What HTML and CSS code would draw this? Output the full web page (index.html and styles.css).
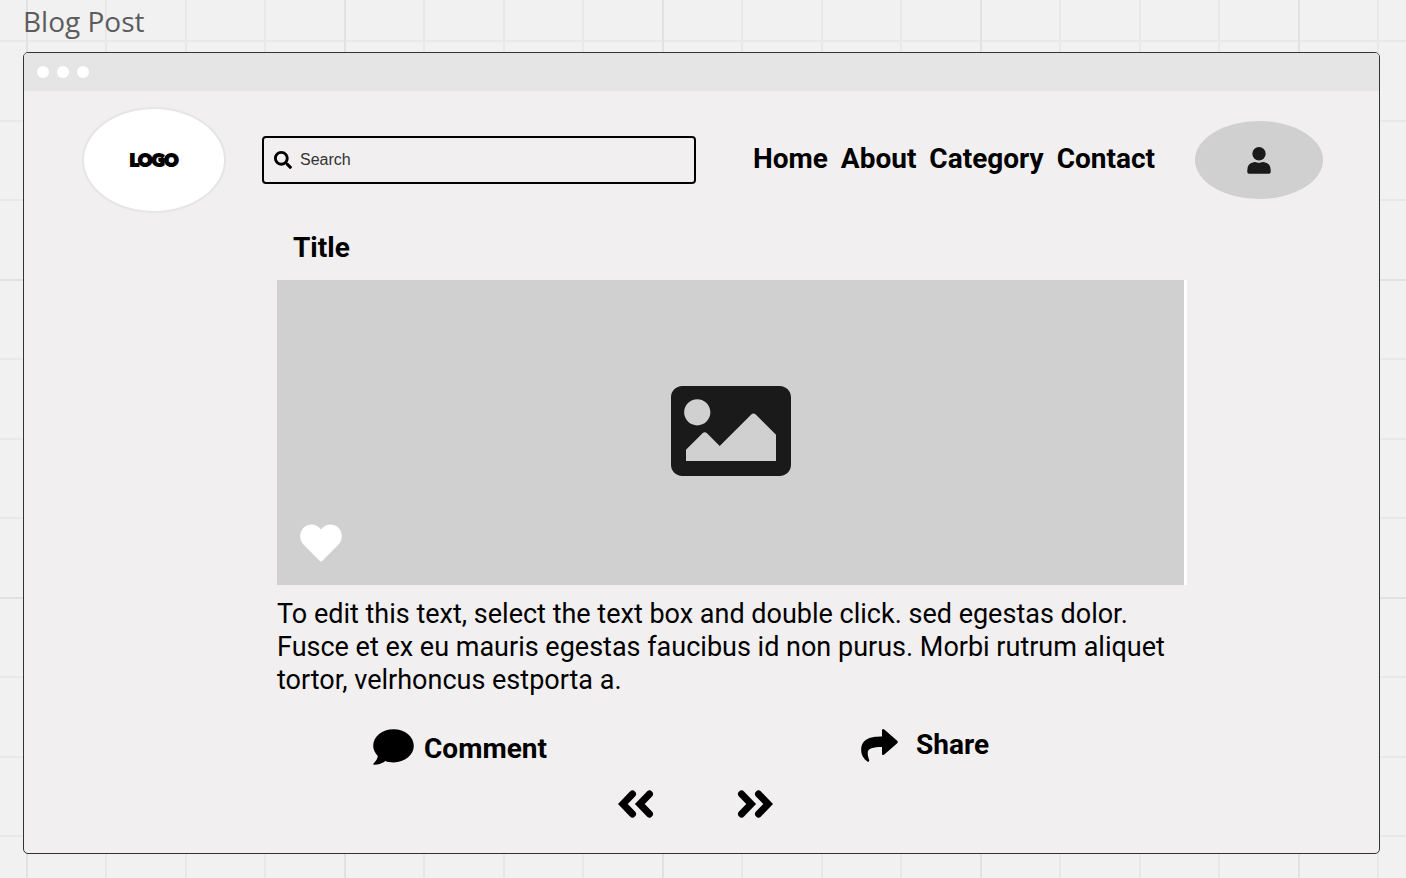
FILE: index.html
```html
<!DOCTYPE html>
<html lang="en">
<head>
<meta charset="utf-8">
<title>Blog Post</title>
<link rel="stylesheet" href="styles.css">
</head>
<body class="board">
<h1 class="frame-name">Blog Post</h1>
<div class="window">
  <div class="titlebar"><span class="dot"></span><span class="dot"></span><span class="dot"></span></div>
  <header class="header">
    <a class="logo" href="#">LOGO</a>
    <form class="search">
      <svg class="search-icon" viewBox="0 0 512 512" aria-hidden="true"><path d="M505 442.7L405.3 343c-4.5-4.5-10.6-7-17-7H372c27.6-35.3 44-79.7 44-128C416 93.1 322.9 0 208 0S0 93.1 0 208s93.1 208 208 208c48.3 0 92.7-16.4 128-44v16.3c0 6.4 2.5 12.5 7 17l99.7 99.7c9.4 9.4 24.6 9.4 33.9 0l28.3-28.3c9.4-9.4 9.4-24.6.1-34zM208 336c-70.7 0-128-57.2-128-128 0-70.7 57.2-128 128-128 70.7 0 128 57.2 128 128 0 70.7-57.2 128-128 128z"/></svg>
      <input class="search-input" type="search" placeholder="Search" aria-label="Search">
    </form>
    <nav class="nav">
      <a href="#">Home</a>
      <a href="#">About</a>
      <a href="#">Category</a>
      <a href="#">Contact</a>
    </nav>
    <button class="avatar" type="button" aria-label="Account">
      <svg class="user-icon" viewBox="0 0 24 27" aria-hidden="true"><circle cx="12" cy="6.8" r="6.7"/><path d="M6.5 15.2Q9 14.8 10 15.5Q12 16.2 14 15.5Q15 14.8 17.500 15.2Q23.700 16.500 23.700 23V25Q23.700 26.700 22 26.700H2Q.3 26.700 .3 25V23Q.3 16.500 6.500 15.200Z"/></svg>
    </button>
  </header>
  <main class="post">
    <h2 class="title">Title</h2>
    <div class="cover">
      <svg class="image-icon" viewBox="0 64 512 384" aria-hidden="true"><path d="M464 448H48c-26.510 0-48-21.490-48-48V112c0-26.510 21.490-48 48-48h416c26.510 0 48 21.490 48 48v288c0 26.510-21.490 48-48 48zM112 120c-30.928 0-56 25.072-56 56s25.072 56 56 56 56-25.072 56-56-25.072-56-56-56zM64 384h384V272l-87.515-87.515c-4.686-4.686-12.284-4.686-16.971 0L208 320l-55.515-55.515c-4.686-4.686-12.284-4.686-16.971 0L64 336v48z"/></svg>
      <button class="like" type="button" aria-label="Like">
        <svg class="heart-icon" viewBox="0 0 42 38" aria-hidden="true"><path d="M21 5.500C17 0 10 -1 5 2.500C-1 7-1 15 3 20L19.600 36.800Q21 38 22.400 36.800L39 20C43 15 43 7 37 2.500C32-1 25 0 21 5.500Z"/></svg>
      </button>
    </div>
    <p class="text">To edit this text, select the text box and double click. sed egestas dolor. Fusce et ex eu mauris egestas faucibus id non purus. Morbi rutrum aliquet tortor, velrhoncus estporta a.</p>
    <div class="actions">
      <button class="action comment" type="button">
        <svg class="comment-icon" viewBox="0 0 41 36" aria-hidden="true"><path d="M20.500 .2C31.800 .2 40.800 7.500 40.800 16.800S31.800 33.400 20.500 33.400C17.500 33.400 14.800 33 12.300 32C9.500 34.200 5.500 35.900 .8 35.700Q0 35.500 .5 34.600Q4.500 30.500 4.800 27C1.800 24 .2 20.500 .2 16.800C.2 7.500 9.200 .2 20.500 .2Z"/></svg>
        Comment
      </button>
      <button class="action share" type="button">
        <svg class="share-icon" viewBox="0 0 37 33" aria-hidden="true"><path d="M21 1.800Q21-.8 23.300 .6L36.200 11.800Q37.300 13 36.200 14.200L23.300 25.500Q21 27 21 24.400V18C12 18 6.500 19.500 6.700 24C6.800 27 7.500 29 8.200 31Q8.400 33.300 6.300 32.500C2.500 29.500 .2 26 .2 21C.2 10 9 7.500 21 7.500Z"/></svg>
        Share
      </button>
    </div>
  </main>
  <nav class="pager" aria-label="Posts">
    <a href="#" aria-label="Previous"><svg class="angle-icon" viewBox="0 0 36 28" aria-hidden="true"><path d="M14.500 4L4.800 14L14.500 24M31.500 4L21.800 14L31.500 24"/></svg></a>
    <a href="#" aria-label="Next"><svg class="angle-icon" viewBox="0 0 36 28" aria-hidden="true"><path d="M4.500 4L14.200 14L4.500 24M21.500 4L31.200 14L21.500 24"/></svg></a>
  </nav>
</div>
</body>
</html>
```
FILE: styles.css
```css
* { box-sizing: border-box; }

.board {
  margin: 0;
  min-height: 100vh;
  padding: 0 26px 24px 23px;
  display: flex;
  flex-direction: column;
  font-family: Roboto, sans-serif;
  color: #000;
  background-color: #f1f1f1;
  background-image:
    linear-gradient(90deg, #e1e1e1 2px, transparent 2px),
    linear-gradient(#e1e1e1 2px, transparent 2px),
    linear-gradient(90deg, transparent 79px, #e8e8e8 79px 81px, transparent 81px 159px, #e8e8e8 159px 161px, transparent 161px 238px, #e8e8e8 238px 240px, transparent 240px),
    linear-gradient(transparent 79px, #e8e8e8 79px 81px, transparent 81px 159px, #e8e8e8 159px 161px, transparent 161px 238px, #e8e8e8 238px 240px, transparent 240px);
  background-size: 318px 318px;
  background-position: 26px 279px;
}

.frame-name {
  margin: 0;
  height: 52px;
  font: 400 28px/42px "Open Sans", sans-serif;
  color: #5c5c5c;
}

.window {
  flex: 1;
  border: 1px solid #333;
  border-radius: 5px;
  background: #f1eff0;
  overflow: hidden;
}

.titlebar {
  height: 38px;
  padding: 0 13px;
  display: flex;
  align-items: center;
  gap: 8px;
  background: #e5e5e5;
}

.dot {
  width: 12px;
  height: 12px;
  border-radius: 50%;
  background: #fff;
}

.header {
  display: flex;
  align-items: center;
  padding: 16px 56px 0 58px;
}

.logo {
  flex: none;
  width: 144px;
  height: 106px;
  display: flex;
  align-items: center;
  justify-content: center;
  border: 2px solid #e5e5e5;
  border-radius: 50%;
  background: #fff;
  color: #000;
  font: 900 17px/20px Lato, sans-serif;
  -webkit-text-stroke: 2px #000;
  text-decoration: none;
}

.search {
  flex: 1;
  height: 48px;
  margin: 0 57px 0 36px;
  padding: 0 10px;
  display: flex;
  align-items: center;
  gap: 8px;
  border: 2px solid #000;
  border-radius: 4px;
}

.search-icon {
  flex: none;
  width: 18px;
  height: 18px;
}

.search-input {
  flex: 1;
  min-width: 0;
  padding: 0;
  border: 0;
  outline: 0;
  background: none;
  font: 16px/20px "Liberation Sans", sans-serif;
}

.search-input::placeholder { color: #333; }

.nav {
  display: flex;
  gap: 13px;
  padding-bottom: 2px;
  font-size: 28px;
  font-weight: 700;
  line-height: 32px;
}

.nav a {
  color: inherit;
  text-decoration: none;
}

.avatar {
  flex: none;
  width: 128px;
  height: 78px;
  margin-left: 40px;
  padding: 0;
  display: grid;
  place-items: center;
  border: 0;
  border-radius: 50%;
  background: #d0d0d0;
}

.user-icon {
  width: 24px;
  height: 27px;
  fill: #1a1a1a;
}

.post { margin: 0 192px 0 253px; }

.title {
  margin: 0;
  padding: 19px 16px 16px;
  font-size: 28px;
  line-height: 32px;
}

.cover {
  position: relative;
  height: 305px;
  display: grid;
  place-items: center;
  padding-bottom: 3px;
  border-right: 3px solid #fff;
  background: #d0d0d0;
}

.image-icon {
  width: 120px;
  height: 90px;
  fill: #1a1a1a;
}

.like {
  position: absolute;
  left: 23px;
  bottom: 23px;
  padding: 0;
  border: 0;
  background: none;
}

.heart-icon {
  display: block;
  width: 42px;
  height: 38px;
  fill: #fff;
}

.text {
  margin: 0;
  padding-top: 13px;
  font-size: 27px;
  line-height: 33px;
}

.actions {
  display: grid;
  grid-template-columns: 488px 1fr;
  align-items: start;
  padding: 32px 0 0 96px;
}

.action {
  justify-self: start;
  display: flex;
  padding: 0;
  border: 0;
  background: none;
  color: inherit;
  font: 700 28px/32px Roboto, sans-serif;
}

.comment {
  align-items: flex-end;
  gap: 10px;
}

.share {
  align-items: flex-start;
  gap: 18px;
}

.comment-icon {
  width: 41px;
  height: 36px;
}

.share-icon {
  width: 37px;
  height: 33px;
}

.pager {
  display: flex;
  justify-content: center;
  gap: 83px;
  padding: 25px 13px 0 0;
}

.angle-icon {
  display: block;
  width: 36px;
  height: 28px;
  fill: none;
  stroke: #000;
  stroke-width: 7;
  stroke-linecap: round;
}
```
